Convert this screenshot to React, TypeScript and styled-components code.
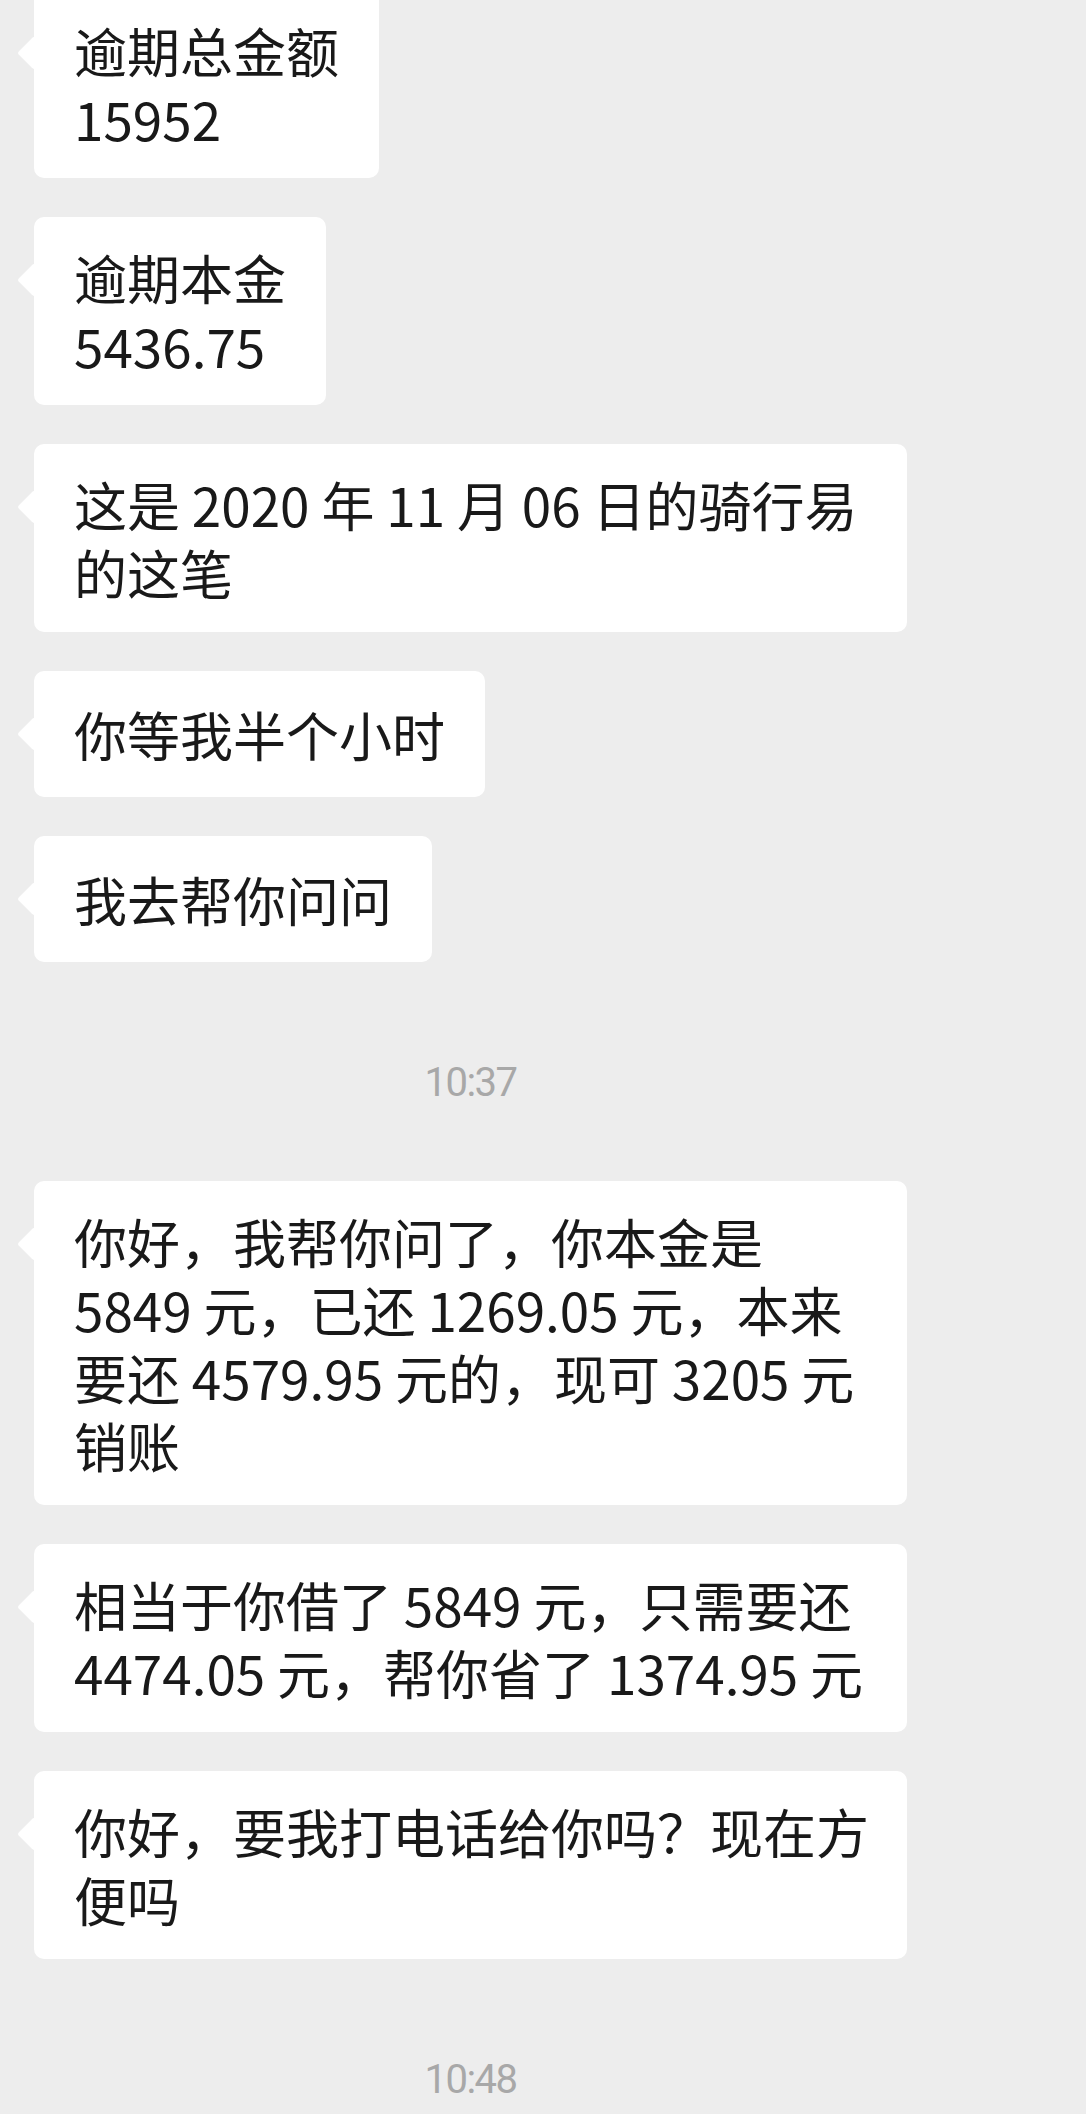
import styled, { createGlobalStyle } from "styled-components";

const GlobalStyle = createGlobalStyle`
  html, body {
    margin: 0;
    padding: 0;
    background: #ededed;
  }
  body {
    font-family: "Noto Sans CJK SC", "Noto Sans", sans-serif;
  }
`;

type Message =
  | { kind: "text"; lines: string[]; full?: boolean }
  | { kind: "time"; label: string };

const messages: Message[] = [
  { kind: "text", lines: ["逾期总金额", "15952"] },
  { kind: "text", lines: ["逾期本金", "5436.75"] },
  {
    kind: "text",
    lines: ["这是 2020 年 11 月 06 日的骑行易", "的这笔"],
    full: true,
  },
  { kind: "text", lines: ["你等我半个小时"] },
  { kind: "text", lines: ["我去帮你问问"] },
  { kind: "time", label: "10:37" },
  {
    kind: "text",
    lines: [
      "你好，我帮你问了，你本金是",
      "5849 元，已还 1269.05 元，本来",
      "要还 4579.95 元的，现可 3205 元",
      "销账",
    ],
    full: true,
  },
  {
    kind: "text",
    lines: ["相当于你借了 5849 元，只需要还", "4474.05 元，帮你省了 1374.95 元"],
    full: true,
  },
  {
    kind: "text",
    lines: ["你好，要我打电话给你吗？现在方", "便吗"],
    full: true,
  },
  { kind: "time", label: "10:48" },
];

const Page = styled.div`
  min-height: 2114px;
  overflow: hidden;
`;

const Chat = styled.div`
  display: flex;
  flex-direction: column;
  align-items: flex-start;
  gap: 39px;
  margin-top: -10px;
  padding-left: 34px;
`;

const Bubble = styled.div<{ $full?: boolean }>`
  position: relative;
  box-sizing: border-box;
  width: ${(p) => (p.$full ? "873px" : "auto")};
  min-height: 126px;
  display: flex;
  flex-direction: column;
  justify-content: center;
  padding: 26px 40px 26px;
  background: #ffffff;
  border-radius: 10px;
  color: #191919;
  font-size: 53px;
  line-height: 68px;

  &::before {
    content: "";
    position: absolute;
    left: -12px;
    top: 51px;
    width: 24px;
    height: 24px;
    background: #ffffff;
    border-radius: 3px;
    transform: rotate(45deg);
  }
`;

const Line = styled.span`
  display: block;
  white-space: nowrap;
`;

const TimeStamp = styled.div`
  width: 873px;
  margin: 57px 0 34px;
  text-align: center;
  color: #a8a8a8;
  font-family: Roboto, "Noto Sans", sans-serif;
  font-size: 40px;
  line-height: 50px;
  letter-spacing: -1.5px;
`;

export default function App() {
  return (
    <Page>
      <GlobalStyle />
      <Chat>
        {messages.map((m, i) =>
          m.kind === "time" ? (
            <TimeStamp key={i}>{m.label}</TimeStamp>
          ) : (
            <Bubble key={i} $full={m.full}>
              {m.lines.map((line, j) => (
                <Line key={j}>{line}</Line>
              ))}
            </Bubble>
          )
        )}
      </Chat>
    </Page>
  );
}
